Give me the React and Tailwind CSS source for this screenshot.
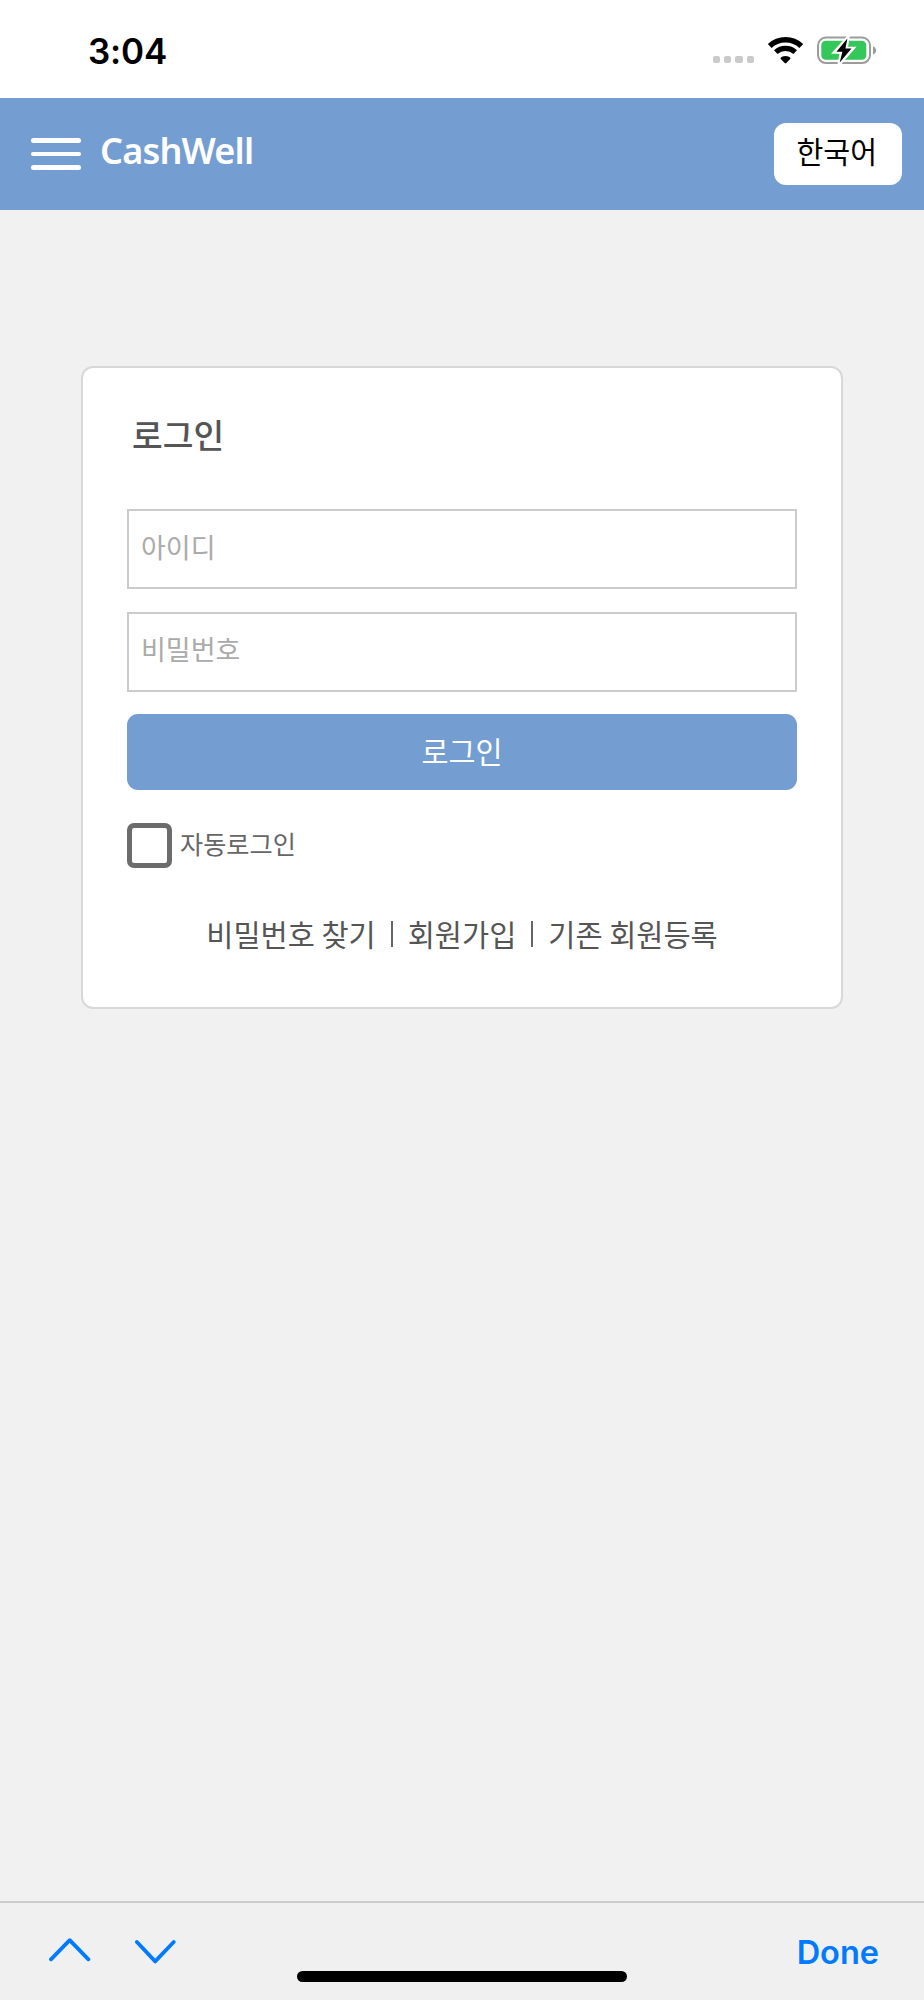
import React, { useState } from 'react';

function StatusBar() {
    return (
        <div className="h-[98px] bg-white flex items-start justify-between pl-[88px] pr-[47px]">
            <span className="mt-[30px] font-['Inter',sans-serif] text-[35px] leading-[42px] font-semibold tracking-[-0.2px] text-black">
                3:04
            </span>
            <div className="flex items-start">
                {/* Signal */}
                <div className="flex gap-[4px] mt-[56px]">
                    {[0, 1, 2, 3].map((dot) => (
                        <span key={dot} className="w-[7.3px] h-[7.3px] rounded-[2px] bg-[#cacaca]" />
                    ))}
                </div>

                {/* Wifi */}
                <svg className="ml-[13px] mt-[36px]" width="37" height="28" viewBox="0 0 37 28" fill="none">
                    <path d="M2.7 10C11.5 1.6 25.5 1.6 34.3 10" stroke="#000" strokeWidth="5.4" />
                    <path d="M8.8 16.2C14.2 11.2 22.8 11.2 28.2 16.2" stroke="#000" strokeWidth="5.2" />
                    <path d="M18.5 15.8c2.1 0 3.9.8 4.7 1.7.4.4.4.9 0 1.3l-3.9 4c-.5.5-1.1.5-1.6 0l-3.9-4c-.4-.4-.4-.9 0-1.3.8-.9 2.6-1.7 4.7-1.7Z" transform="translate(0 4.3)" fill="#000" />
                </svg>

                {/* Battery */}
                <svg className="ml-[13px] mt-[34px]" width="60" height="34" viewBox="0 0 60 34" fill="none">
                    <rect x="1" y="3.5" width="52" height="25.6" rx="8" stroke="#9b9b9b" strokeWidth="2" />
                    <path d="M56 12.2c4.2 1.8 4.2 7 0 8.2Z" fill="#9b9b9b" />
                    <rect x="4.3" y="6.8" width="45" height="19" rx="4.5" fill="#34c759" />
                    <path d="M30.4 4.5 18.5 17.8h6.3L22.7 29 35.1 14.8h-6.4Z" fill="#000" stroke="#fff" strokeWidth="4" />
                    <path d="M30.4 4.5 19.4 17.8h6L22.7 28.6 34.5 14.5h-6.1Z" fill="#000" />
                </svg>
            </div>
        </div>
    );
}

function Header() {
    return (
        <header className="h-[112px] bg-[#749dd2] flex items-center justify-between pl-[31px] pr-[22.5px]">
            <div className="flex items-center">
                <button aria-label="menu" className="flex flex-col gap-[9px] w-[49.5px]">
                    <span className="h-[4.4px] rounded-full bg-white" />
                    <span className="h-[4.4px] rounded-full bg-white" />
                    <span className="h-[4.4px] rounded-full bg-white" />
                </button>
                <h1 className="ml-[19.5px] pb-[6px] font-['Noto_Sans',sans-serif] text-[36px] leading-[44px] font-semibold tracking-[-0.8px] text-white">
                    CashWell
                </h1>
            </div>
            <button className="w-[127.5px] h-[62px] pb-[8px] pr-[2px] rounded-[12px] bg-white text-[29.2px] leading-[40px] text-black">
                한국어
            </button>
        </header>
    );
}

function LoginCard() {
    const [autoLogin, setAutoLogin] = useState(false);

    return (
        <section className="w-[762px] h-[643px] mx-auto mt-[156px] bg-white border-2 border-[#d8d8d8] rounded-[12px] px-[44px]">
            <h2 className="mt-[42px] pl-[5px] text-[33.4px] leading-[48px] font-medium text-[#555]">로그인</h2>
            <input
                type="text"
                placeholder="아이디"
                className="block w-full h-[80px] mt-[51px] border-2 border-[#ccc] pl-[12px] pb-[6px] text-[27px] placeholder:text-[#aaa] outline-none"
            />
            <input
                type="password"
                placeholder="비밀번호"
                className="block w-full h-[80px] mt-[23px] border-2 border-[#ccc] pl-[12px] pb-[7px] text-[27px] placeholder:text-[#aaa] outline-none"
            />
            <button className="block w-full h-[76px] mt-[22px] pb-[3px] rounded-[11px] bg-[#749dd2] text-[29.4px] text-white">
                로그인
            </button>
            <label className="flex items-center mt-[33px] h-[45px]">
                <input
                    type="checkbox"
                    checked={autoLogin}
                    onChange={(e) => setAutoLogin(e.target.checked)}
                    className="appearance-none w-[45px] h-[45px] border-[5px] border-[#6c6c6c] rounded-[7px] checked:bg-[#6c6c6c]"
                />
                <span className="ml-[8px] pb-[6px] text-[25.2px] leading-[36px] text-[#666]">자동로그인</span>
            </label>
            <nav className="flex items-center justify-center mt-[44px] text-[29.5px] leading-[42px] text-[#555]">
                <a href="#find">비밀번호 찾기</a>
                <span className="w-[2px] h-[26px] ml-[15px] mr-[15px] mt-[1px] bg-[#666]" />
                <a href="#join">회원가입</a>
                <span className="w-[2px] h-[26px] ml-[15px] mr-[15px] mt-[1px] bg-[#666]" />
                <a href="#register">기존 회원등록</a>
            </nav>
        </section>
    );
}

function KeyboardBar() {
    return (
        <footer className="relative h-[99px] mt-auto border-t-2 border-[#cbcbcb] bg-[#f0f0f0] flex items-start justify-between pl-[49px] pr-[45px]">
            <div className="flex gap-[44px] mt-[35px] text-[#007aff]">
                <svg width="42" height="26" viewBox="0 0 42 26" fill="none" stroke="currentColor" strokeWidth="3.8" strokeLinecap="round" strokeLinejoin="round">
                    <path d="M2 21.3 20.7 2.2 39.4 21.3" />
                </svg>
                <svg width="42" height="28" viewBox="0 0 42 28" fill="none" stroke="currentColor" strokeWidth="3.8" strokeLinecap="round" strokeLinejoin="round">
                    <path d="M1.9 4 20.2 23.4 38.7 4" />
                </svg>
            </div>
            <button className="mt-[30px] font-['Inter',sans-serif] text-[32.5px] leading-[40px] font-semibold text-[#007aff]">
                Done
            </button>
            {/* Home indicator */}
            <span className="absolute left-[297px] top-[68px] w-[330px] h-[11px] rounded-full bg-black" />
        </footer>
    );
}

export default function App() {
    return (
        <div className="w-full h-[2000px] flex flex-col bg-[#f1f1f1] overflow-hidden font-['Noto_Sans_CJK_KR',sans-serif]">
            <StatusBar />
            <Header />
            <LoginCard />
            <KeyboardBar />
        </div>
    );
}
